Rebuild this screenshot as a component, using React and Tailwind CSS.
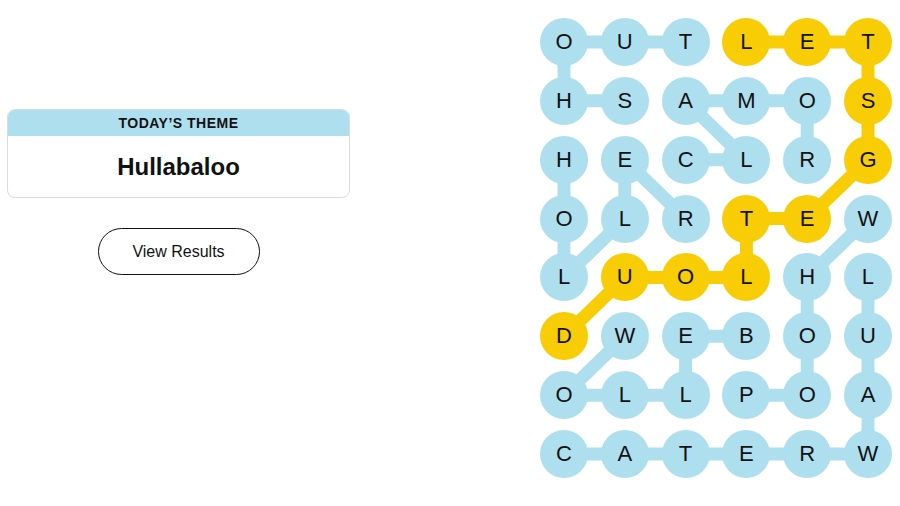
import React from "react";

const ROWS = ["OUTLET", "HSAMOS", "HECLRG", "OLRTEW", "LUOLHL", "DWEBOU", "OLLPOA", "CATERW"];

const YELLOW = new Set(["0,3", "0,4", "0,5", "1,5", "2,5", "3,4", "3,3", "4,3", "4,2", "4,1", "5,0"]);

const BLUE_LINKS = [
  [0, 0, 0, 1], [0, 1, 0, 2], [0, 0, 1, 0], [1, 0, 1, 1], [1, 2, 1, 3], [1, 3, 1, 4],
  [1, 2, 2, 3], [1, 4, 2, 4], [2, 2, 2, 3], [2, 0, 3, 0], [3, 0, 4, 0], [2, 1, 3, 1],
  [2, 1, 3, 2], [3, 1, 4, 0], [3, 5, 4, 4], [4, 4, 5, 4], [5, 4, 6, 4], [4, 5, 5, 5],
  [5, 5, 6, 5], [6, 5, 7, 5], [5, 1, 6, 0], [5, 2, 5, 3], [5, 2, 6, 2], [6, 0, 6, 1],
  [6, 1, 6, 2], [6, 3, 6, 4], [7, 0, 7, 1], [7, 1, 7, 2], [7, 2, 7, 3], [7, 3, 7, 4], [7, 4, 7, 5],
];

const YELLOW_LINKS = [
  [0, 3, 0, 4], [0, 4, 0, 5], [0, 5, 1, 5], [1, 5, 2, 5], [2, 5, 3, 4], [3, 4, 3, 3],
  [3, 3, 4, 3], [4, 3, 4, 2], [4, 2, 4, 1], [4, 1, 5, 0],
];

const CX = (c) => 24 + c * 60.8;
const CY = (r) => 24 + r * 58.86;

function Board() {
  return (
    <div className="relative grid grid-cols-[repeat(6,48px)] gap-x-[12.8px] gap-y-[10.86px]">
      <svg className="absolute inset-0 z-0" width="352" height="460" viewBox="0 0 352 460">
        {BLUE_LINKS.map(([r1, c1, r2, c2], i) => (
          <line key={"b" + i} x1={CX(c1)} y1={CY(r1)} x2={CX(c2)} y2={CY(r2)} stroke="#aedfee" strokeWidth="13" />
        ))}
        {YELLOW_LINKS.map(([r1, c1, r2, c2], i) => (
          <line key={"y" + i} x1={CX(c1)} y1={CY(r1)} x2={CX(c2)} y2={CY(r2)} stroke="#f8cd05" strokeWidth="13" />
        ))}
      </svg>
      {ROWS.map((row, r) =>
        row.split("").map((ch, c) => (
          <div
            key={r + "-" + c}
            className={
              "relative z-10 w-12 h-12 rounded-full flex items-center justify-center text-[22px] leading-none text-[#121212] " +
              (YELLOW.has(r + "," + c) ? "bg-[#f8cd05]" : "bg-[#aedfee]")
            }
          >
            {ch}
          </div>
        ))
      )}
    </div>
  );
}

export default function App() {
  return (
    <div className="flex bg-white w-[900px] h-[506px] font-['Liberation_Sans',Arial,sans-serif]">
      <div className="ml-[7px] w-[343px] pt-[109px] flex flex-col">
        <div className="border border-[#dcdcdc] rounded-lg overflow-hidden">
          <div className="bg-[#aedfee] h-[26px] flex items-center justify-center text-[14px] font-bold tracking-[0.5px] text-[#121212]">
            TODAY’S THEME
          </div>
          <div className="h-[61px] flex items-center justify-center text-[24px] font-bold text-[#121212]">
            Hullabaloo
          </div>
        </div>
        <button className="mt-[30px] mx-auto w-[162px] h-[47px] rounded-full border border-[#121212] bg-white text-[16px] text-[#121212] flex items-center justify-center">
          View Results
        </button>
      </div>
      <div className="ml-[190px] pt-[18px]">
        <Board />
      </div>
    </div>
  );
}
